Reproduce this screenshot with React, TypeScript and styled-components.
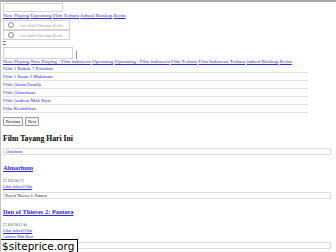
import React from "react";
import styled, { createGlobalStyle } from "styled-components";

const GlobalStyle = createGlobalStyle`
  html, body {
    margin: 0;
    padding: 0;
    background: #ffffff;
  }
  body {
    font-family: "Liberation Serif", "Times New Roman", serif;
    font-size: 5px;
    color: #000;
  }
`;

const Page = styled.div`
  position: relative;
  width: 336px;
  height: 252px;
  overflow: hidden;
  border-top: 2px solid #a6a6a6;
  border-left: 1px solid #c4c4c4;
  box-sizing: border-box;
  padding: 1px 2px 0 2px;
`;

const Link = styled.a`
  color: #2b2bd6;
  text-decoration: underline;
  cursor: pointer;
`;

const TextBox = styled.div<{ $w: number; $h?: number }>`
  width: ${(p) => p.$w}px;
  height: ${(p) => p.$h ?? 9}px;
  border: 1px solid #d4d4d4;
  box-sizing: border-box;
  display: flex;
  align-items: center;
  gap: 5px;
  padding: 0 4px;
  color: #9a9a9a;
  font-size: 4px;
`;

const Nav = styled.nav<{ $tight?: boolean }>`
  display: flex;
  flex-wrap: wrap;
  gap: 1.3px;
  line-height: 6px;
  margin: ${(p) => (p.$tight ? "0" : "1px 0")};
`;

const Radio = styled.span`
  width: 4px;
  height: 4px;
  border: 1px solid #8a8a8a;
  border-radius: 50%;
`;

const Burger = styled.div`
  width: 3px;
  height: 2px;
  border-top: 1px solid #777;
  border-bottom: 1px solid #777;
  margin: 1px 0 2px 0;
`;

const AreaRow = styled.div`
  display: flex;
  align-items: flex-end;
  gap: 3px;
`;

const ResizeTick = styled.span`
  width: 1px;
  height: 8px;
  background: #8d8d8d;
`;

const FilmList = styled.ul`
  list-style: none;
  margin: 0;
  padding: 0;
  width: 305px;
`;

const FilmItem = styled.li`
  height: 8px;
  line-height: 7px;
  border-bottom: 1px solid #e2e2e6;
  box-sizing: border-box;
  color: #2b2bd6;
`;

const Pager = styled.div`
  display: flex;
  gap: 2px;
  margin-top: 4px;
`;

const PagerButton = styled.button`
  font-family: "Liberation Serif", serif;
  font-size: 4px;
  padding: 1px 2px;
  height: 9px;
  background: #f4f4f4;
  border: 1px solid #9a9a9a;
  border-radius: 1px;
`;

const Heading = styled.h2`
  font-size: 7.7px;
  font-weight: bold;
  margin: 8px 0 5px 0;
`;

const WideBox = styled.div<{ $dark?: boolean }>`
  width: 328px;
  height: 7px;
  margin-top: 2px;
  border: 1px solid #dcdce2;
  box-sizing: border-box;
  font-size: 4px;
  line-height: 5px;
  padding-left: 1px;
  color: ${(p) => (p.$dark ? "#111" : "#2b2bd6")};
`;

const FilmTitle = styled.h3`
  font-size: 6.4px;
  font-weight: bold;
  margin: 9px 0 7px 0;
`;

const Meta = styled.div`
  font-size: 4px;
  line-height: 6px;
  color: #333;
`;

const SmallLink = styled(Link)`
  font-size: 4px;
  line-height: 6px;
  display: block;
`;

const Watermark = styled.div`
  position: absolute;
  left: 0;
  bottom: 0;
  width: 77px;
  height: 13px;
  background: #fff;
  border: 1px solid #000;
  border-left: none;
  border-bottom: none;
  box-sizing: border-box;
  font-family: "DejaVu Sans", sans-serif;
  font-size: 10.5px;
  line-height: 12px;
  padding-left: 1px;
  color: #000;
`;

const topNav = ["Now Playing", "Upcoming", "Film Terbaru", "Jadwal Bioskop", "Berita"];
const mainNav = [
  "Now Playing",
  "Now Playing - Film indonesia",
  "Upcoming",
  "Upcoming - Film indonesia",
  "Film Terbaru",
  "Film Indonesia Terbaru",
  "Jadwal Bioskop",
  "Berita",
];
const films = [
  "Film 1 Kakak 7 Ponakan",
  "Film 5 Insan 2 Makmum",
  "Film About Family",
  "Film Almarhum",
  "Film Andwar Mak Byar",
  "Film Ketindihan",
];

export default function App() {
  return (
    <>
      <GlobalStyle />
      <Page>
        <TextBox $w={60} />
        <Nav>
          {topNav.map((n) => (
            <Link key={n}>{n}</Link>
          ))}
        </Nav>
        <TextBox $w={67} $h={10}>
          <Radio />
          Cari Judul Film atau Berita
        </TextBox>
        <TextBox $w={67} $h={10}>
          <Radio />
          Cari Judul Film atau Berita
        </TextBox>
        <Burger />
        <AreaRow>
          <TextBox $w={70} $h={12} />
          <ResizeTick />
        </AreaRow>
        <Nav $tight>
          {mainNav.map((n, i) => (
            <Link key={i}>{n}</Link>
          ))}
        </Nav>
        <FilmList>
          {films.map((f) => (
            <FilmItem key={f}>{f}</FilmItem>
          ))}
        </FilmList>
        <Pager>
          <PagerButton>Previous</PagerButton>
          <PagerButton>Next</PagerButton>
        </Pager>
        <Heading>Film Tayang Hari Ini</Heading>
        <WideBox>Almarhum</WideBox>
        <FilmTitle>
          <Link>Almarhum</Link>
        </FilmTitle>
        <Meta>☐ 8.6/10 (?)</Meta>
        <SmallLink>Lihat Jadwal Film</SmallLink>
        <WideBox $dark>Den of Thieves 2: Pantera</WideBox>
        <FilmTitle>
          <Link>Den of Thieves 2: Pantera</Link>
        </FilmTitle>
        <Meta>☐ 8.6/10 (1 k)</Meta>
        <SmallLink>Lihat Jadwal Film</SmallLink>
        <SmallLink>Andwar Mak Byar</SmallLink>
        <WideBox />
        <Watermark>$siteprice.org</Watermark>
      </Page>
    </>
  );
}
